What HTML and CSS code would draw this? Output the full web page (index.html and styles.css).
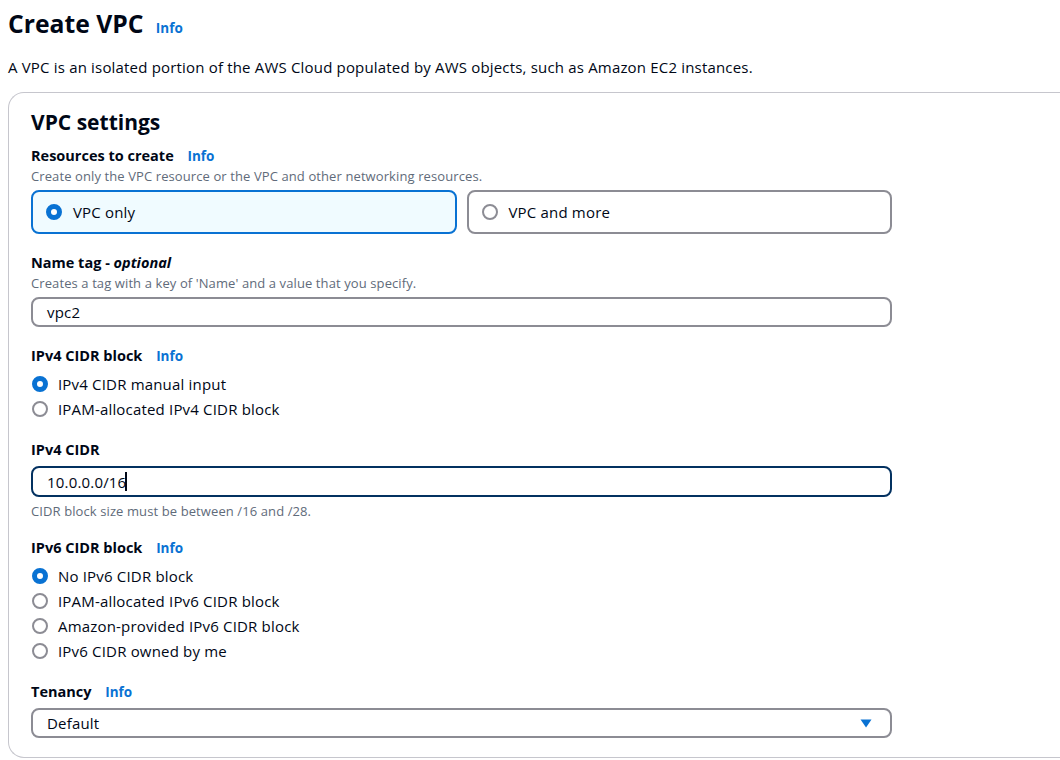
FILE: index.html
```html
<!DOCTYPE html>
<html lang="en">
<head>
<meta charset="utf-8">
<title>Create VPC</title>
<link rel="stylesheet" href="styles.css">
</head>
<body>
<div class="page">
  <header class="page-header">
    <h1 class="title">Create VPC <a class="info info-title" href="#">Info</a></h1>
    <p class="page-desc">A VPC is an isolated portion of the AWS Cloud populated by AWS objects, such as Amazon EC2 instances.</p>
  </header>

  <section class="container">
    <h2 class="section-title">VPC settings</h2>
    <div class="form">
      <div class="field">
        <div class="label">Resources to create <a class="info" href="#">Info</a></div>
        <div class="desc">Create only the VPC resource or the VPC and other networking resources.</div>
        <div class="tiles">
          <div class="tile tile-selected"><span class="radio radio-on"></span><span>VPC only</span></div>
          <div class="tile"><span class="radio"></span><span>VPC and more</span></div>
        </div>
      </div>

      <div class="field">
        <div class="label">Name tag - <em>optional</em></div>
        <div class="desc">Creates a tag with a key of 'Name' and a value that you specify.</div>
        <div class="input">vpc2</div>
      </div>

      <div class="field">
        <div class="label">IPv4 CIDR block <a class="info" href="#">Info</a></div>
        <div class="radio-group">
          <div class="radio-row"><span class="radio radio-on"></span><span>IPv4 CIDR manual input</span></div>
          <div class="radio-row"><span class="radio"></span><span>IPAM-allocated IPv4 CIDR block</span></div>
        </div>
      </div>

      <div class="field">
        <div class="label">IPv4 CIDR</div>
        <div class="input input-focus">10.0.0.0/16<span class="caret"></span></div>
        <div class="hint">CIDR block size must be between /16 and /28.</div>
      </div>

      <div class="field">
        <div class="label">IPv6 CIDR block <a class="info" href="#">Info</a></div>
        <div class="radio-group">
          <div class="radio-row"><span class="radio radio-on"></span><span>No IPv6 CIDR block</span></div>
          <div class="radio-row"><span class="radio"></span><span>IPAM-allocated IPv6 CIDR block</span></div>
          <div class="radio-row"><span class="radio"></span><span>Amazon-provided IPv6 CIDR block</span></div>
          <div class="radio-row"><span class="radio"></span><span>IPv6 CIDR owned by me</span></div>
        </div>
      </div>

      <div class="field">
        <div class="label">Tenancy <a class="info" href="#">Info</a></div>
        <div class="input select"><span>Default</span>
          <svg class="select-caret" width="12" height="9" viewBox="0 0 12 9"><path d="M0.5 0.5 H11.5 L6 8.5 Z" fill="#0972d3"/></svg>
        </div>
      </div>
    </div>
  </section>
</div>
</body>
</html>
```

FILE: styles.css
```css
* { box-sizing: border-box; }

html, body {
  margin: 0;
  padding: 0;
  background: #ffffff;
  overflow: hidden;
}

body {
  font-family: "Open Sans", "Noto Sans", "Liberation Sans", sans-serif;
  color: #000716;
  font-size: 15px;
  letter-spacing: 0.18px;
}

.page {
  padding: 8px 0 0 8px;
  width: 1060px;
}

.title {
  margin: 0;
  font-size: 24.7px;
  line-height: 32px;
  font-weight: 700;
  letter-spacing: 0;
}

.info {
  color: #0972d3;
  font-size: 13.5px;
  font-weight: 700;
  text-decoration: none;
  margin-left: 10px;
  letter-spacing: 0;
}

.info-title {
  margin-left: 6px;
}

.page-desc {
  margin: 13px 0 0 0;
  line-height: 20px;
}

.container {
  margin-top: 15px;
  border: 1px solid #c6c6cd;
  border-right: none;
  border-radius: 16px 0 0 16px;
  padding: 15px 22px 19px 22px;
  width: 1052px;
}

.section-title {
  margin: 0;
  font-size: 21px;
  line-height: 28px;
  font-weight: 700;
  letter-spacing: 0;
}

.form {
  width: 861px;
  display: flex;
  flex-direction: column;
  gap: 18px;
  margin-top: 9px;
}

.label {
  font-weight: 700;
  font-size: 14.5px;
  line-height: 22px;
  letter-spacing: 0;
}

.label em {
  font-style: italic;
}

.desc {
  color: #5f6b7a;
  font-size: 13px;
  letter-spacing: 0.1px;
  line-height: 18px;
  margin-bottom: 5px;
}

.hint {
  color: #5f6b7a;
  font-size: 13px;
  letter-spacing: 0.1px;
  line-height: 16px;
  margin-top: 6px;
}

.tiles {
  display: flex;
  gap: 10px;
}

.tile {
  flex: 1;
  height: 44px;
  border: 2px solid #8c8c94;
  border-radius: 8px;
  display: flex;
  align-items: center;
  gap: 11px;
  padding: 0 13px;
}

.tile-selected {
  border-color: #0972d3;
  background: #f0fbff;
}

.radio {
  width: 16px;
  height: 16px;
  border-radius: 50%;
  border: 2px solid #8c8c94;
  flex: none;
  background: #ffffff;
}

.radio-on {
  border: 5px solid #0972d3;
}

.radio-group {
  display: flex;
  flex-direction: column;
  margin-top: 4px;
}

.radio-row {
  height: 25px;
  display: flex;
  align-items: center;
  gap: 10px;
  padding-left: 1px;
}

.input {
  height: 30px;
  border: 2px solid #8c8c94;
  border-radius: 8px;
  display: flex;
  align-items: center;
  padding: 0 14px;
  margin-top: 3px;
}

.input-focus {
  border-color: #033160;
  height: 31px;
  margin-top: 5px;
}

.caret {
  display: inline-block;
  width: 1.5px;
  height: 19px;
  background: #000716;
  margin-left: -1px;
}

.select {
  justify-content: space-between;
  padding-right: 18px;
  margin-top: 5px;
}

.select-caret {
  display: block;
}
```
